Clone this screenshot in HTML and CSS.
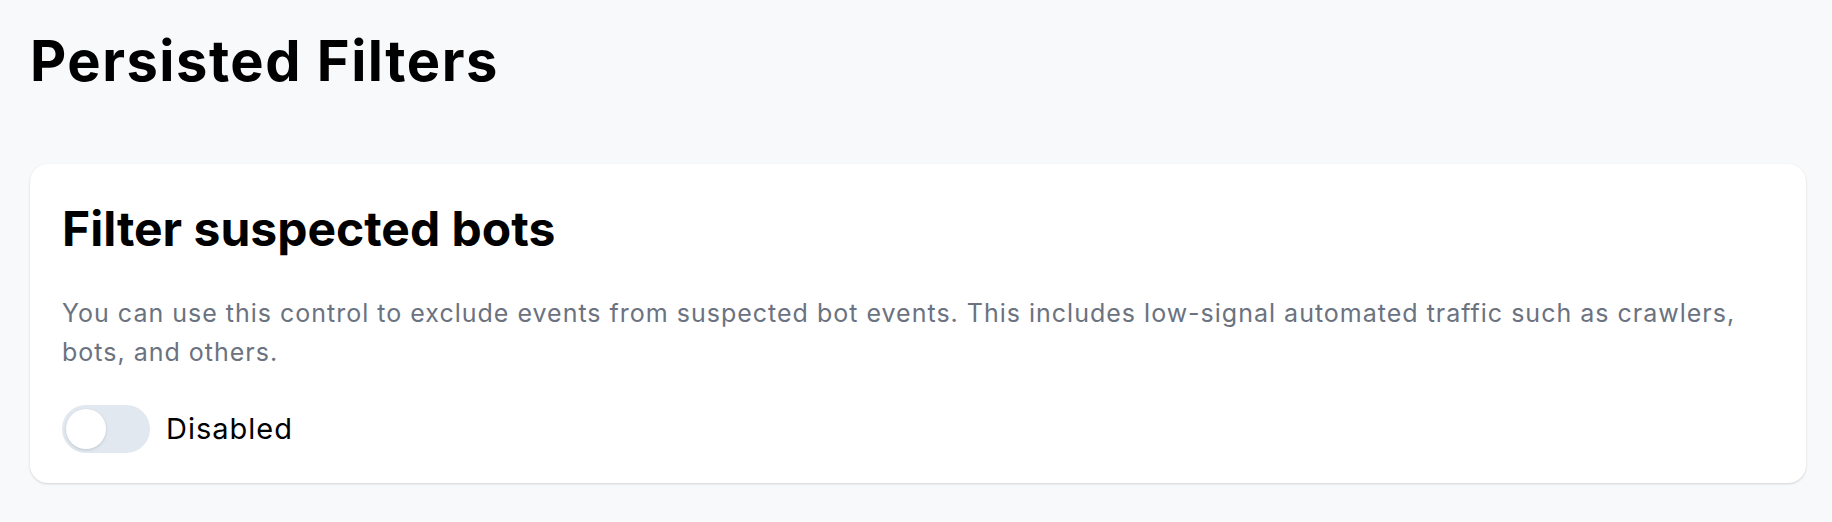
FILE: index.html
```html
<!DOCTYPE html>
<html lang="en">
<head>
    <meta charset="UTF-8">
    <meta name="viewport" content="width=device-width, initial-scale=1.0">
    <title>Persisted Filters</title>
    <link rel="stylesheet" href="styles.css">
</head>
<body>
    <main class="page">
        <h1 class="page-title">Persisted Filters</h1>

        <section class="card">
            <h2 class="card-title">Filter suspected bots</h2>
            <p class="card-text">You can use this control to exclude events from suspected bot events. This includes low-signal automated traffic such as crawlers, bots, and others.</p>
            <label class="toggle-row">
                <span class="toggle">
                    <span class="toggle-knob"></span>
                </span>
                <span class="toggle-label">Disabled</span>
            </label>
        </section>
    </main>
</body>
</html>
```

FILE: styles.css
```css
body {
    margin: 0;
    background-color: #f8f9fb;
    font-family: Inter, "Noto Sans", sans-serif;
    color: #000;
}

.page {
    padding: 28px 26px 30px 30px;
}

.page-title {
    margin: 0 0 69px 0;
    font-size: 56px;
    font-weight: 700;
    line-height: 1.2;
    letter-spacing: 1.5px;
}

.card {
    background: #fff;
    border-radius: 18px;
    box-shadow: 0 1px 3px rgba(0, 0, 0, 0.1), 0 1px 2px rgba(0, 0, 0, 0.06);
    padding: 36px 32px 30px 32px;
}

.card-title {
    margin: 0 0 36px 0;
    font-size: 48px;
    font-weight: 700;
    line-height: 1.2;
}

.card-text {
    margin: 0 0 33px 0;
    font-size: 25px;
    line-height: 39px;
    letter-spacing: 1px;
    color: #6b7280;
}

.toggle-row {
    display: flex;
    align-items: center;
    gap: 16px;
}

.toggle {
    display: flex;
    align-items: center;
    width: 88px;
    height: 48px;
    padding: 0 4px;
    box-sizing: border-box;
    border-radius: 24px;
    background: #e2e8f0;
}

.toggle-knob {
    width: 40px;
    height: 40px;
    border-radius: 50%;
    background: #fff;
    box-shadow: 0 1px 3px rgba(0, 0, 0, 0.15);
}

.toggle-label {
    font-size: 29px;
    letter-spacing: 1px;
}
```
